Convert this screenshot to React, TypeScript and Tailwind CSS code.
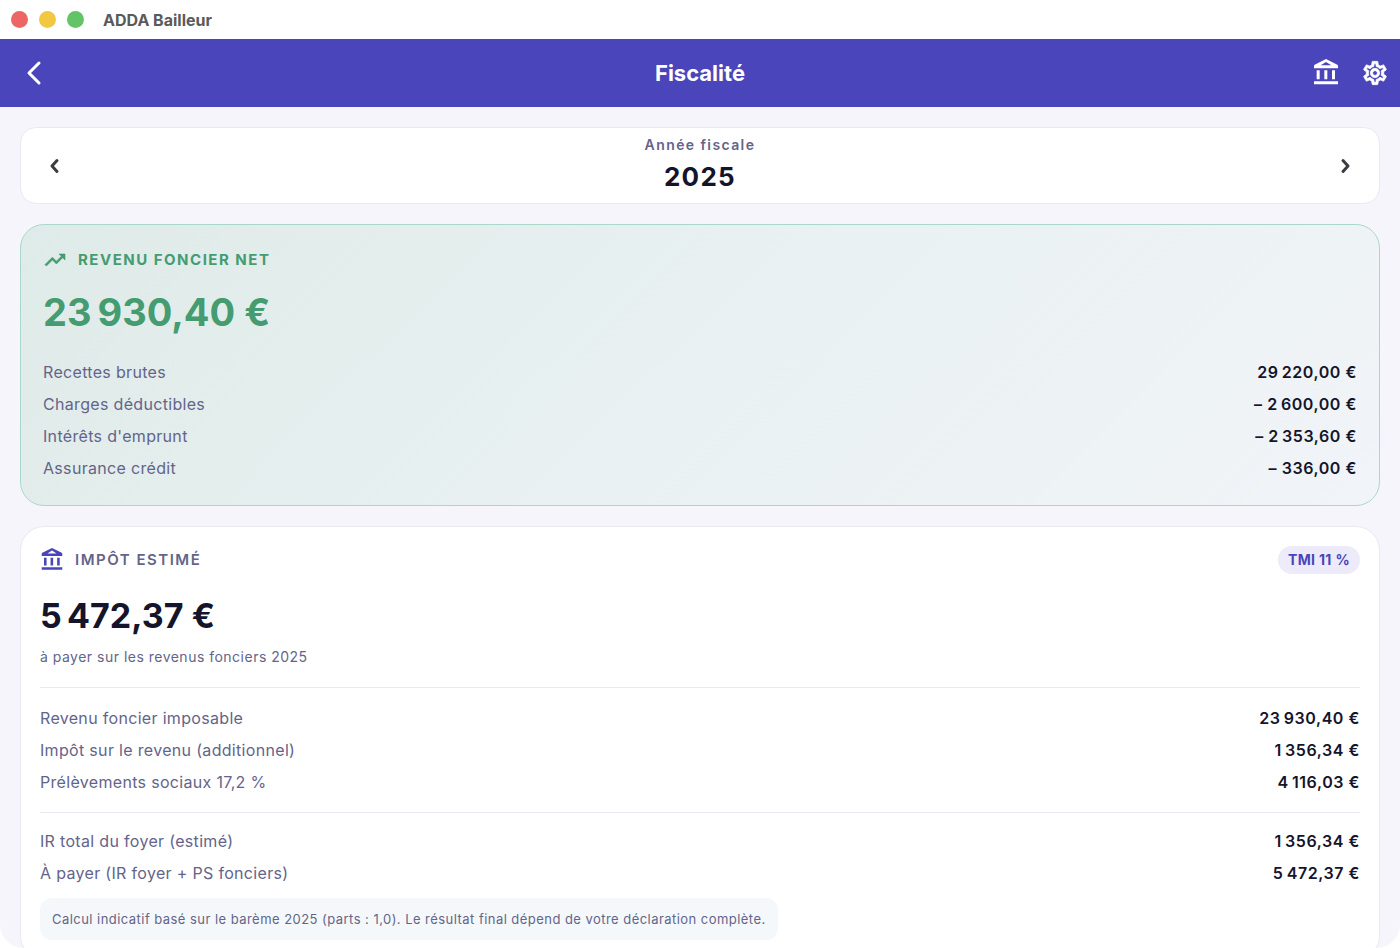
import { MdOutlineSettings, MdTrendingUp } from "react-icons/md";

type Line = { label: string; value: string };

const revenus: Line[] = [
  { label: "Recettes brutes", value: "29\u2009220,00\u00a0€" },
  { label: "Charges déductibles", value: "– 2\u2009600,00\u00a0€" },
  { label: "Intérêts d'emprunt", value: "– 2\u2009353,60\u00a0€" },
  { label: "Assurance crédit", value: "– 336,00\u00a0€" },
];

const impots: Line[] = [
  { label: "Revenu foncier imposable", value: "23\u2009930,40\u00a0€" },
  { label: "Impôt sur le revenu (additionnel)", value: "1\u2009356,34\u00a0€" },
  { label: "Prélèvements sociaux 17,2 %", value: "4\u2009116,03\u00a0€" },
];

const totaux: Line[] = [
  { label: "IR total du foyer (estimé)", value: "1\u2009356,34\u00a0€" },
  { label: "À payer (IR foyer + PS fonciers)", value: "5\u2009472,37\u00a0€" },
];

function Chevron({ d }: { d: string }) {
  return (
    <svg
      viewBox="0 0 28 28"
      className="size-7"
      fill="none"
      stroke="currentColor"
      strokeWidth={3}
      strokeLinecap="round"
      strokeLinejoin="round"
      aria-hidden="true"
    >
      <path d={d} />
    </svg>
  );
}

function BankIcon({ className }: { className: string }) {
  return (
    <svg viewBox="0 0 84 84" className={className} fill="currentColor" aria-hidden="true">
      <path
        fillRule="evenodd"
        d="M42 0 76 17Q78 18 78 21V28H6V21Q6 18 8 17ZM42 9 26 19H58Z"
      />
      <path d="M14 34h9v27h-9zM37 34h9v27h-9zM60 34h9v27h-9zM6 67h72v9H6z" />
    </svg>
  );
}

function Lines({ lines }: { lines: Line[] }) {
  return (
    <dl className="flex flex-col gap-2 text-base">
      {lines.map((line) => (
        <div key={line.label} className="flex justify-between">
          <dt className="tracking-[0.02em] text-[#64648a]">{line.label}</dt>
          <dd className="font-semibold tracking-[0.035em] text-[#14142b]">{line.value}</dd>
        </div>
      ))}
    </dl>
  );
}

export default function App() {
  return (
    <div className="flex h-screen flex-col bg-white font-['Inter',sans-serif]">
      <div className="flex h-[39px] shrink-0 items-center pl-[11px]">
        <div className="flex gap-[11px]">
          <span className="size-[17px] rounded-full bg-[#ec6665]" />
          <span className="size-[17px] rounded-full bg-[#f2c841]" />
          <span className="size-[17px] rounded-full bg-[#62c466]" />
        </div>
        <span className="ml-[19px] text-base font-bold text-[#5a5a5a]">
          ADDA Bailleur
        </span>
      </div>

      <header className="grid h-[68px] shrink-0 grid-cols-3 items-center bg-[#4a45bb] px-[11px] text-white">
        <button type="button" aria-label="Retour" className="justify-self-start pl-2">
          <Chevron d="M20 4 10 14l10 10" />
        </button>
        <h1 className="text-center text-[22px] font-bold">Fiscalité</h1>
        <div className="flex items-center gap-[21px] justify-self-end">
          <button type="button" aria-label="Comptes">
            <BankIcon className="size-7" />
          </button>
          <button type="button" aria-label="Paramètres">
            <MdOutlineSettings
              className="size-7 [&>path:first-child]:stroke-none"
              stroke="currentColor"
              strokeWidth={0.6}
            />
          </button>
        </div>
      </header>

      <main className="min-h-0 flex-1 overflow-y-auto rounded-b-3xl bg-[#f5f5fb] p-5 [scrollbar-width:none]">
        <section className="flex items-center justify-between rounded-2xl border border-[#e9e9f2] bg-white px-5 py-[6px]">
          <button type="button" aria-label="Année précédente" className="text-[#3c3c40]">
            <Chevron d="M16 8.5l-5 5.5 5 5.5" />
          </button>
          <div className="text-center">
            <p className="text-sm leading-[22px] font-semibold tracking-widest text-[#64648a]">
              Année fiscale
            </p>
            <p className="text-[26px] leading-[41px] font-bold tracking-wider text-[#14142b]">
              2025
            </p>
          </div>
          <button type="button" aria-label="Année suivante" className="text-[#3c3c40]">
            <Chevron d="M12 8.5l5 5.5-5 5.5" />
          </button>
        </section>

        <section className="mt-5 rounded-3xl border border-[#a9d8cb] bg-[linear-gradient(135deg,#dfebe8,#e9f1f2_50%,#f1f4f8)] px-[22px] pt-[23px] pb-[25px]">
          <div className="flex items-center gap-[11px] text-[#449c70]">
            <MdTrendingUp
              className="size-6 [&>path:first-child]:stroke-none"
              stroke="currentColor"
              strokeWidth={0.6}
            />
            <h2 className="text-[15px] leading-6 font-bold tracking-widest">
              REVENU FONCIER NET
            </h2>
          </div>
          <p className="mt-4 mb-6 text-[38px] leading-[48px] font-bold text-[#449c70]">
            23{"\u2009"}930,40{"\u00a0"}€
          </p>
          <Lines lines={revenus} />
        </section>

        <section className="mt-5 rounded-3xl border border-[#e9e9f2] bg-white p-[19px]">
          <div className="flex items-center justify-between">
            <div className="flex items-center gap-[11px]">
              <BankIcon className="size-6 text-[#4a45bb]" />
              <h2 className="text-[15px] leading-6 font-semibold tracking-widest text-[#64648a]">
                IMPÔT ESTIMÉ
              </h2>
            </div>
            <span className="rounded-full bg-[#edebf9] px-[10px] py-1 text-sm leading-5 font-bold tracking-wide text-[#4a45bb]">
              TMI 11 %
            </span>
          </div>
          <p className="mt-[18px] text-[34px] leading-[48px] font-bold text-[#14142b]">
            5{"\u2009"}472,37{"\u00a0"}€
          </p>
          <p className="mt-[5px] text-sm leading-6 tracking-[0.035em] text-[#64648a]">
            à payer sur les revenus fonciers 2025
          </p>
          <hr className="my-[18px] border-[#e9e9f2]" />
          <Lines lines={impots} />
          <hr className="mt-[18px] mb-4 border-[#e9e9f2]" />
          <Lines lines={totaux} />
          <p className="mt-[13px] w-fit rounded-xl bg-[#f5f8fa] px-3 py-[11px] text-[13px] leading-5 tracking-[0.035em] text-[#64648a]">
            Calcul indicatif basé sur le barème 2025 (parts : 1,0). Le résultat
            final dépend de votre déclaration complète.
          </p>
        </section>
      </main>
    </div>
  );
}
